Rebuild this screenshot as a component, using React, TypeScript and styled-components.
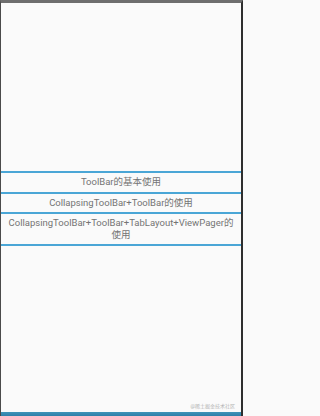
import React from "react";
import styled, { createGlobalStyle } from "styled-components";

const Global = createGlobalStyle`
  html, body { margin: 0; padding: 0; background: #fafafa; }
  #root { width: 243px; height: 416px; }
`;

const Screen = styled.div`
  position: relative;
  box-sizing: border-box;
  width: 243px;
  height: 416px;
  display: flex;
  flex-direction: column;
  background: #fafafa;
  border-top: 3px solid #6e6e6e;
  border-left: 1px solid #4a4a4a;
  border-right: 2px solid #2e2e2e;
  font-family: Roboto, "Noto Sans CJK SC", sans-serif;
`;

const Content = styled.div`
  flex: 1;
  display: flex;
  flex-direction: column;
  justify-content: center;
`;

const List = styled.div`
  display: flex;
  flex-direction: column;
  border-top: 2px solid #4aa6d6;
  margin-top: 1px;
`;

const Item = styled.div<{ $h: number }>`
  box-sizing: content-box;
  height: ${(p) => p.$h}px;
  display: flex;
  align-items: center;
  justify-content: center;
  text-align: center;
  padding: 0 4px;
  border-bottom: 2px solid #4aa6d6;
  color: #747474;
  font-size: 9.5px;
  line-height: 12px;
`;

const BottomBar = styled.div`
  height: 4px;
  background: linear-gradient(#3f93b8, #2f7fa8);
`;

const Watermark = styled.div`
  position: absolute;
  right: 6px;
  bottom: 7px;
  font-size: 5px;
  line-height: 6px;
  color: #b4b4b4;
`;

const items = [
  { label: "ToolBar的基本使用", h: 19 },
  { label: "CollapsingToolBar+ToolBar的使用", h: 18 },
  { label: "CollapsingToolBar+ToolBar+TabLayout+ViewPager的使用", h: 30 },
];

export default function App() {
  return (
    <>
      <Global />
      <Screen>
        <Content>
          <List>
            {items.map((it) => (
              <Item key={it.label} $h={it.h}>
                {it.label}
              </Item>
            ))}
          </List>
        </Content>
        <BottomBar />
        <Watermark>@稀土掘金技术社区</Watermark>
      </Screen>
    </>
  );
}
